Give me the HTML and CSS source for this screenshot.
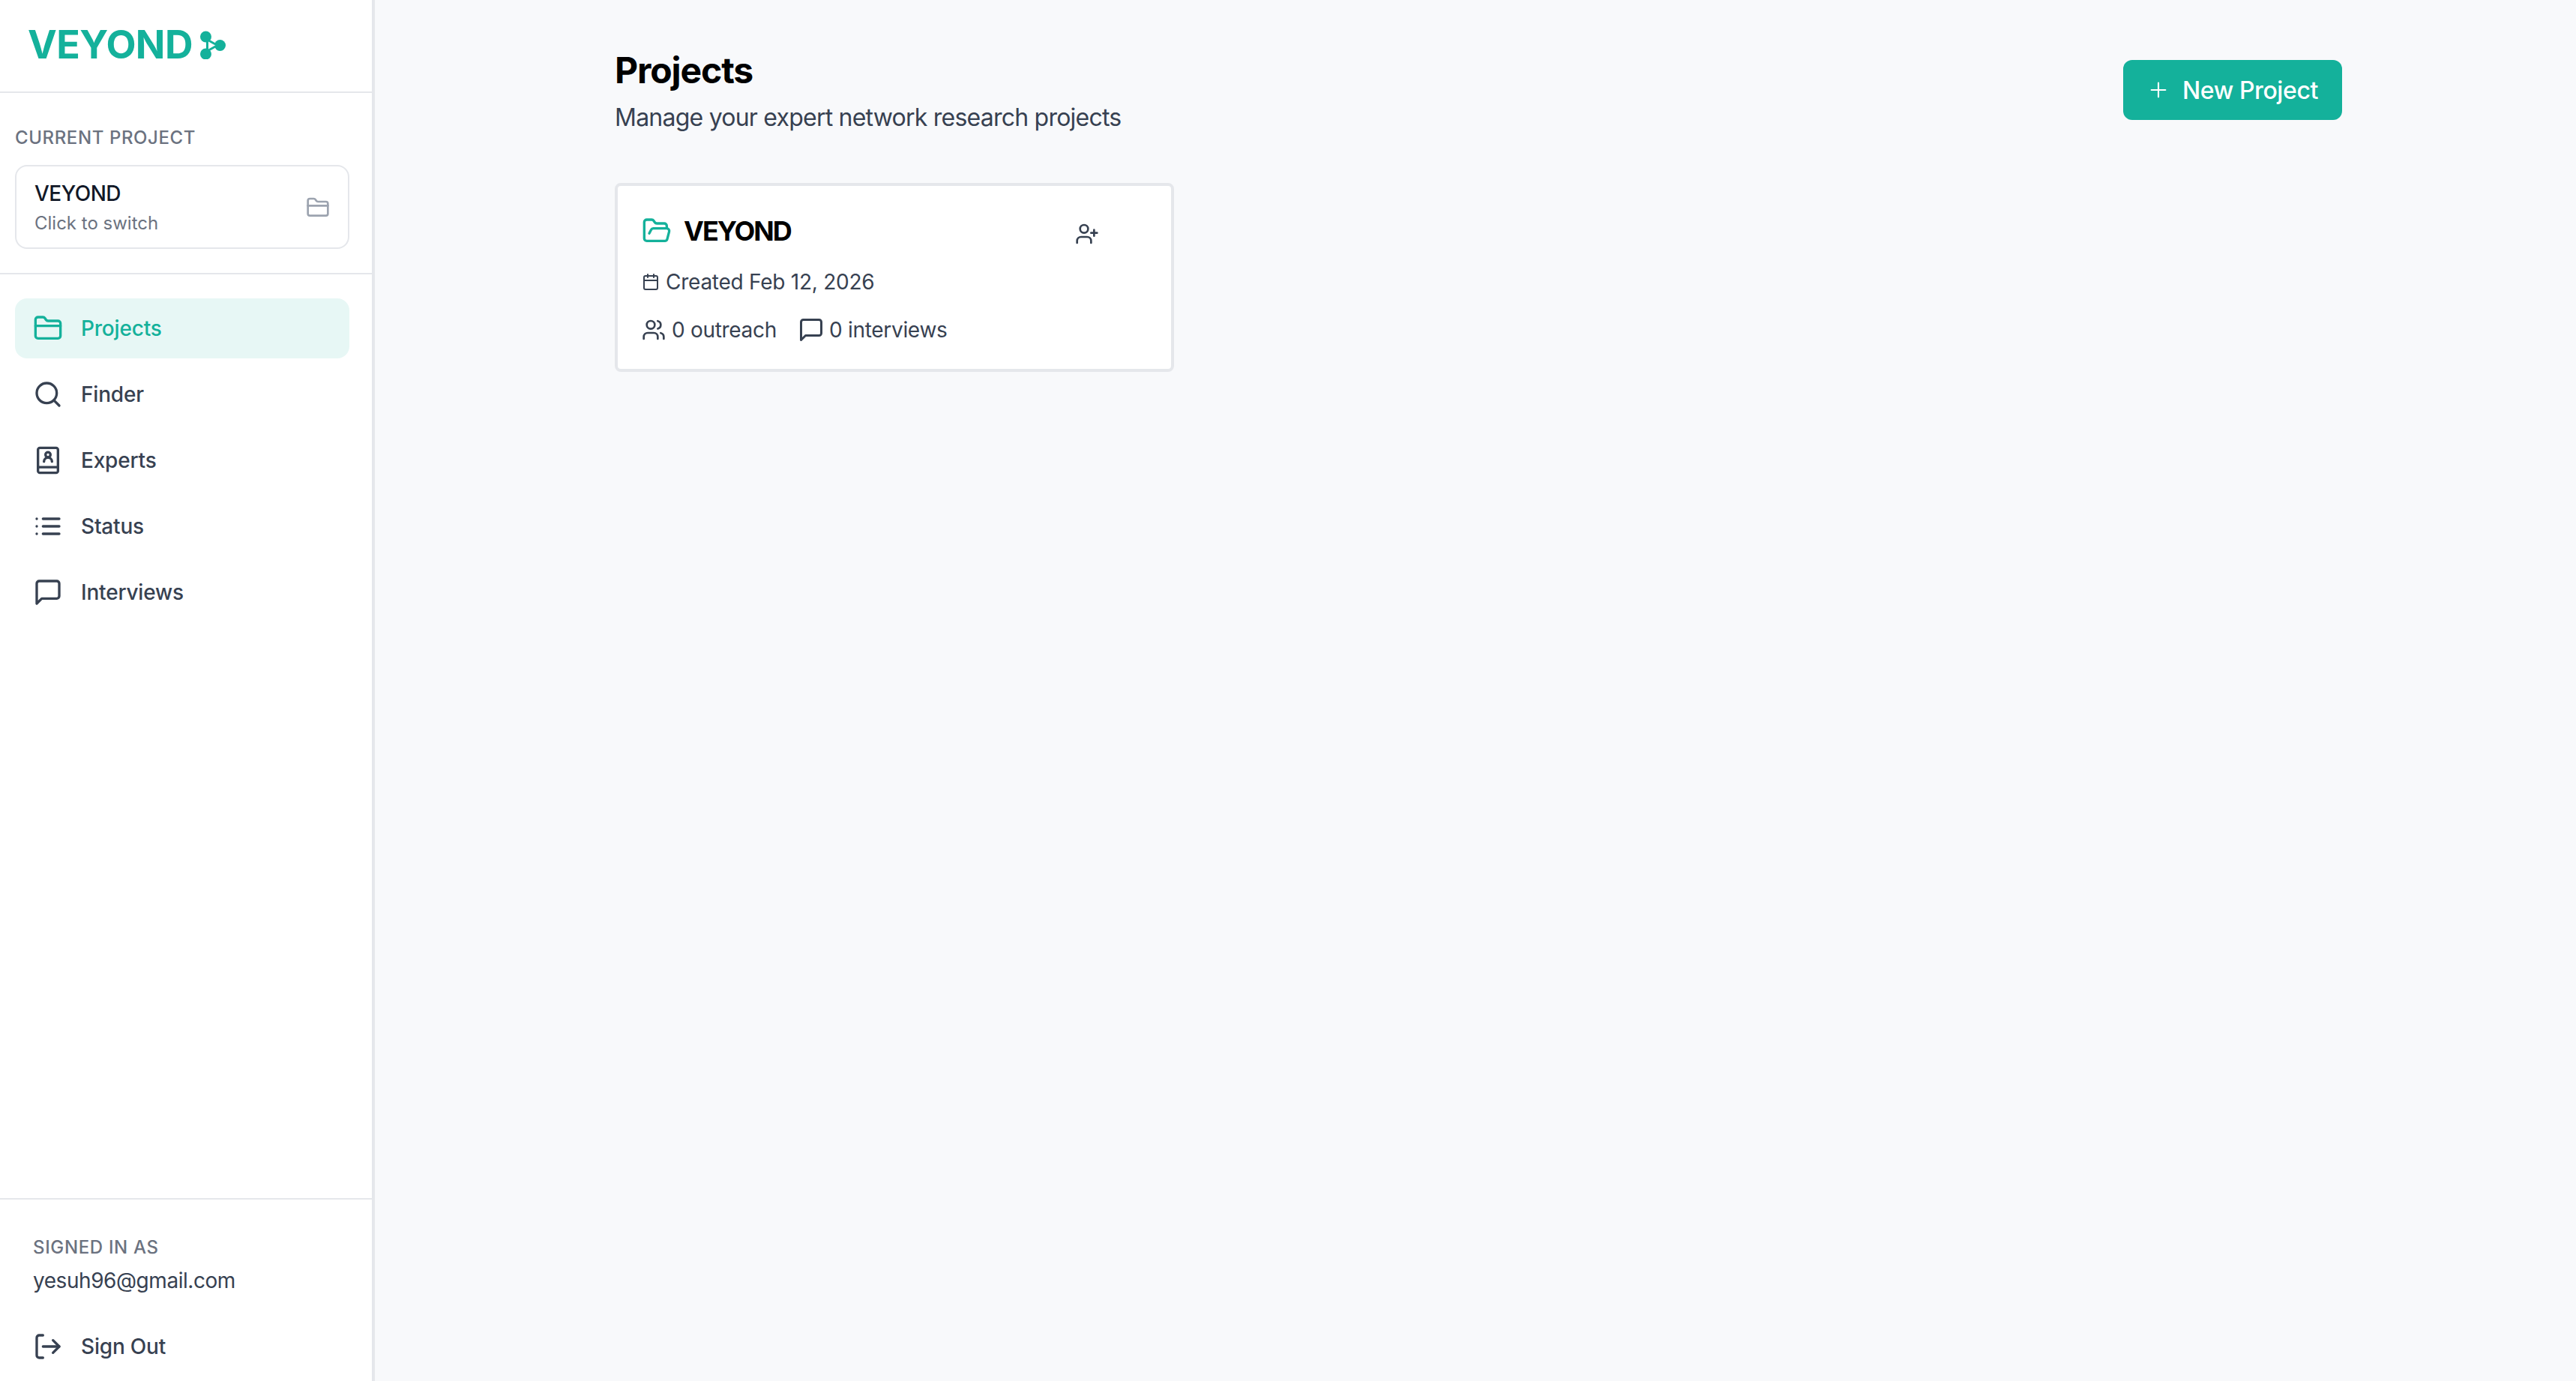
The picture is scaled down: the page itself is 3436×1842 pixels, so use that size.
FILE: index.html
```html
<!DOCTYPE html>
<html lang="en">
<head>
    <meta charset="UTF-8">
    <meta name="viewport" content="width=device-width, initial-scale=1">
    <title>Projects</title>
    <link rel="stylesheet" href="styles.css">
</head>
<body>
<svg class="sprite" aria-hidden="true">
    <symbol id="icon-folder-closed" viewBox="0 0 24 24">
        <path d="M20 20a2 2 0 0 0 2-2V8a2 2 0 0 0-2-2h-7.9a2 2 0 0 1-1.69-.9L9.6 3.9A2 2 0 0 0 7.93 3H4a2 2 0 0 0-2 2v13a2 2 0 0 0 2 2Z"/>
        <path d="M2 10h20"/>
    </symbol>
    <symbol id="icon-folder-open" viewBox="0 0 24 24">
        <path d="m6 14 1.5-2.9A2 2 0 0 1 9.24 10H20a2 2 0 0 1 1.94 2.5l-1.54 6a2 2 0 0 1-1.95 1.5H4a2 2 0 0 1-2-2V5a2 2 0 0 1 2-2h3.9a2 2 0 0 1 1.69.9l.81 1.2a2 2 0 0 0 1.67.9H18a2 2 0 0 1 2 2v2"/>
    </symbol>
    <symbol id="icon-search" viewBox="0 0 24 24">
        <circle cx="11" cy="11" r="8"/>
        <path d="m21 21-4.3-4.3"/>
    </symbol>
    <symbol id="icon-book-user" viewBox="0 0 24 24">
        <rect x="4" y="2" width="16" height="20" rx="1.5"/>
        <path d="M4 17.5h16"/>
        <circle cx="12" cy="7.5" r="2"/>
        <path d="M8.8 13a3.2 3.2 0 0 1 6.4 0"/>
    </symbol>
    <symbol id="icon-list" viewBox="0 0 24 24">
        <path d="M3 6h.01M3 12h.01M3 18h.01M8 6h13M8 12h13M8 18h13"/>
    </symbol>
    <symbol id="icon-message" viewBox="0 0 24 24">
        <path d="M21 15a2 2 0 0 1-2 2H7l-4 4V5a2 2 0 0 1 2-2h14a2 2 0 0 1 2 2z"/>
    </symbol>
    <symbol id="icon-logout" viewBox="0 0 24 24">
        <path d="M8 21H5a2 2 0 0 1-2-2V5a2 2 0 0 1 2-2h3"/>
        <path d="m16 17 5-5-5-5"/>
        <path d="M21 12H8"/>
    </symbol>
    <symbol id="icon-user-plus" viewBox="0 0 24 24">
        <path d="M16 21v-2a4 4 0 0 0-4-4H6a4 4 0 0 0-4 4v2"/>
        <circle cx="9" cy="7" r="4"/>
        <path d="M19 8v6M22 11h-6"/>
    </symbol>
    <symbol id="icon-users" viewBox="0 0 24 24">
        <path d="M16 21v-2a4 4 0 0 0-4-4H6a4 4 0 0 0-4 4v2"/>
        <circle cx="9" cy="7" r="4"/>
        <path d="M22 21v-2a4 4 0 0 0-3-3.87M16 3.13a4 4 0 0 1 0 7.75"/>
    </symbol>
    <symbol id="icon-calendar" viewBox="0 0 24 24">
        <path d="M8 2v4M16 2v4"/>
        <rect x="3" y="4" width="18" height="18" rx="2"/>
        <path d="M3 10h18"/>
    </symbol>
    <symbol id="icon-plus" viewBox="0 0 24 24">
        <path d="M5 12h14M12 5v14"/>
    </symbol>
</svg>

<div class="app">
    <aside class="sidebar">
        <div class="sidebar-logo">
            <span class="logo-text">VEYOND</span>
            <svg class="logo-mark" viewBox="0 0 34 38" aria-hidden="true">
                <circle cx="7.5" cy="8" r="7.5"/>
                <circle cx="7.5" cy="31" r="7.5"/>
                <circle cx="26.5" cy="19.5" r="7.5"/>
                <path class="logo-mark-tri" d="M9.5 12 L23 19.5 L9.5 27 Z"/>
            </svg>
        </div>

        <div class="sidebar-project">
            <div class="sidebar-label">CURRENT PROJECT</div>
            <div class="project-switch">
                <div>
                    <div class="project-switch-name">VEYOND</div>
                    <div class="project-switch-hint">Click to switch</div>
                </div>
                <svg class="icon project-switch-icon"><use href="#icon-folder-closed"></use></svg>
            </div>
        </div>

        <nav class="sidebar-nav">
            <a class="nav-item nav-item-active"><svg class="icon nav-icon"><use href="#icon-folder-closed"></use></svg>Projects</a>
            <a class="nav-item"><svg class="icon nav-icon"><use href="#icon-search"></use></svg>Finder</a>
            <a class="nav-item"><svg class="icon nav-icon"><use href="#icon-book-user"></use></svg>Experts</a>
            <a class="nav-item"><svg class="icon nav-icon"><use href="#icon-list"></use></svg>Status</a>
            <a class="nav-item"><svg class="icon nav-icon"><use href="#icon-message"></use></svg>Interviews</a>
        </nav>

        <div class="sidebar-footer">
            <div class="signed-in">
                <div class="signed-in-label">SIGNED IN AS</div>
                <div class="signed-in-email">yesuh96@gmail.com</div>
            </div>
            <a class="nav-item"><svg class="icon nav-icon"><use href="#icon-logout"></use></svg>Sign Out</a>
        </div>
    </aside>

    <main class="main">
        <div class="page-head">
            <div>
                <h1 class="page-title">Projects</h1>
                <p class="page-desc">Manage your expert network research projects</p>
            </div>
            <button class="btn-new"><svg class="icon btn-new-icon"><use href="#icon-plus"></use></svg>New Project</button>
        </div>

        <div class="project-card">
            <div class="project-card-head">
                <svg class="icon project-card-folder"><use href="#icon-folder-open"></use></svg>
                <h2 class="project-card-title">VEYOND</h2>
                <svg class="icon project-card-invite"><use href="#icon-user-plus"></use></svg>
            </div>
            <div class="project-card-date">
                <svg class="icon meta-icon-small"><use href="#icon-calendar"></use></svg>Created Feb 12, 2026
            </div>
            <div class="project-card-stats">
                <span class="stat"><svg class="icon meta-icon"><use href="#icon-users"></use></svg>0 outreach</span>
                <span class="stat"><svg class="icon meta-icon-wide"><use href="#icon-message"></use></svg>0 interviews</span>
            </div>
        </div>
    </main>
</div>
</body>
</html>
```

FILE: styles.css
```css
*{
    box-sizing: border-box;
}
html, body{
    margin: 0;
    padding: 0;
}
body{
    font-family: Inter, "Liberation Sans", sans-serif;
    color: #374151;
    background: #f8f9fb;
}

.sprite{
    display: none;
}
.icon{
    fill: none;
    stroke: currentColor;
    stroke-width: 2;
    stroke-linecap: round;
    stroke-linejoin: round;
    flex-shrink: 0;
}

.app{
    display: flex;
    height: 1842px;
    overflow: hidden;
}

/* sidebar */
.sidebar{
    width: 500px;
    flex-shrink: 0;
    display: flex;
    flex-direction: column;
    background: #fff;
    border-right: 4px solid #e5e7eb;
}
.sidebar-logo{
    height: 124px;
    padding: 0 0 2px 37px;
    display: flex;
    align-items: center;
    border-bottom: 2px solid #e5e7eb;
}
.logo-text{
    font-size: 52px;
    font-weight: 700;
    line-height: 1;
    letter-spacing: -0.6px;
    color: #14b19b;
}
.logo-mark{
    width: 34px;
    height: 38px;
    margin-left: 10px;
    fill: #14b19b;
}
.logo-mark-tri{
    fill: #fff;
    stroke: #14b19b;
    stroke-width: 3;
    stroke-linejoin: round;
}

.sidebar-project{
    padding: 44px 30px 32px 20px;
    border-bottom: 2px solid #e5e7eb;
}
.sidebar-label{
    font-size: 24px;
    font-weight: 500;
    line-height: 32px;
    letter-spacing: 0.6px;
    color: #6b7280;
    margin-bottom: 20px;
}
.project-switch{
    height: 112px;
    padding: 0 24px;
    display: flex;
    align-items: center;
    justify-content: space-between;
    border: 2px solid #e5e7eb;
    border-radius: 16px;
}
.project-switch-name{
    font-size: 28px;
    font-weight: 500;
    line-height: 40px;
    letter-spacing: -0.5px;
    color: #111827;
}
.project-switch-hint{
    margin-top: 4px;
    font-size: 24px;
    line-height: 32px;
    color: #6b7280;
}
.project-switch-icon{
    width: 32px;
    height: 32px;
    margin-top: 2px;
    color: #9ca3af;
}

.sidebar-nav{
    flex: 1;
    padding: 32px 30px 0 20px;
    display: flex;
    flex-direction: column;
    gap: 8px;
}
.nav-item{
    height: 80px;
    padding-left: 24px;
    display: flex;
    align-items: center;
    gap: 24px;
    font-size: 28px;
    font-weight: 500;
    letter-spacing: -0.2px;
    border-radius: 16px;
    color: #374151;
}
.nav-item-active{
    background: #e7f7f5;
    color: #14b19b;
}
.nav-icon{
    width: 40px;
    height: 40px;
}

.sidebar-footer{
    padding: 48px 30px 6px 20px;
    border-top: 2px solid #e5e7eb;
}
.signed-in{
    padding: 0 24px 28px;
}
.signed-in-label{
    font-size: 24px;
    font-weight: 500;
    line-height: 32px;
    letter-spacing: 0.65px;
    color: #6b7280;
    margin-bottom: 8px;
}
.signed-in-email{
    font-size: 28px;
    line-height: 40px;
    letter-spacing: -0.45px;
}

/* main */
.main{
    flex: 1;
    padding: 62px 312px 0 320px;
}
.page-head{
    display: flex;
    align-items: flex-start;
    justify-content: space-between;
    margin-bottom: 63px;
}
.page-title{
    margin: 0;
    font-size: 48px;
    font-weight: 700;
    line-height: 64px;
    letter-spacing: -1.1px;
    color: #000;
}
.page-desc{
    margin: 7px 0 0;
    font-size: 32px;
    line-height: 48px;
    letter-spacing: -0.77px;
}
.btn-new{
    height: 80px;
    margin-top: 18px;
    padding: 0 32px 0 31px;
    display: flex;
    align-items: center;
    gap: 16px;
    font-family: inherit;
    font-size: 32px;
    font-weight: 500;
    letter-spacing: -0.4px;
    color: #fff;
    background: #14b19b;
    border: 0;
    border-radius: 12px;
}
.btn-new-icon{
    width: 32px;
    height: 32px;
    stroke-width: 1.6;
}

.project-card{
    width: 746px;
    height: 252px;
    padding: 36px 32px 0;
    background: #fff;
    border: 4px solid #e5e7eb;
    border-radius: 8px;
}
.project-card-head{
    height: 48px;
    display: flex;
    align-items: center;
    gap: 16px;
}
.project-card-folder{
    width: 40px;
    height: 40px;
    color: #14b19b;
}
.project-card-title{
    margin: 0;
    font-size: 36px;
    font-weight: 700;
    letter-spacing: -2px;
    color: #000;
}
.project-card-invite{
    width: 32px;
    height: 32px;
    margin-left: auto;
    margin-right: 64px;
    margin-top: 8px;
}
.project-card-date{
    margin-top: 24px;
    display: flex;
    align-items: center;
    gap: 8px;
    font-size: 28px;
    line-height: 40px;
    letter-spacing: -0.25px;
}
.project-card-stats{
    margin-top: 24px;
    display: flex;
    align-items: center;
    gap: 28px;
    font-size: 28px;
    line-height: 40px;
    letter-spacing: -0.3px;
}
.stat{
    display: flex;
    align-items: center;
    gap: 8px;
}
.meta-icon-small{
    width: 24px;
    height: 24px;
}
.meta-icon{
    width: 32px;
    height: 32px;
}
.meta-icon-wide{
    width: 36px;
    height: 36px;
    margin-right: -2px;
}
```
